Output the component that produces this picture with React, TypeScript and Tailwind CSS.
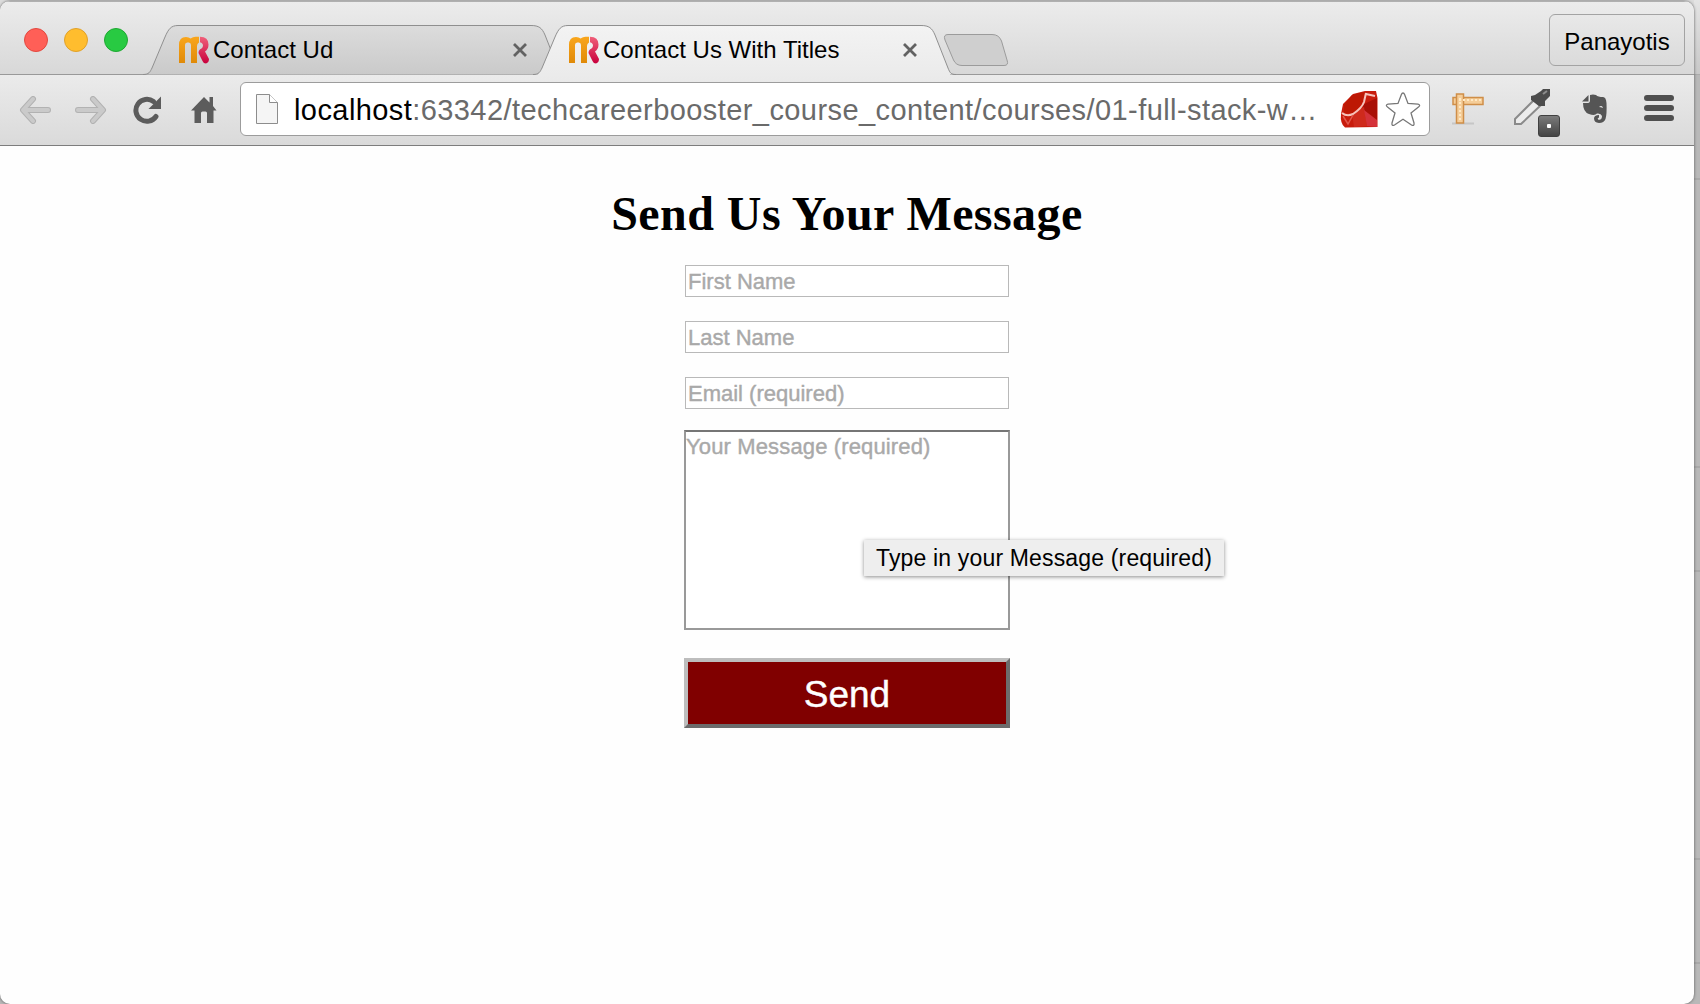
import React from "react";

function Favicon({ id }: { id: string }) {
  return (
    <svg width="32" height="28" viewBox="0 0 32 28" className="shrink-0">
      <defs>
        <linearGradient id={id + "o"} x1="0" y1="0" x2="0" y2="1">
          <stop offset="0" stopColor="#f9a61c" />
          <stop offset="1" stopColor="#e08a08" />
        </linearGradient>
        <linearGradient id={id + "r"} x1="0" y1="0" x2="0" y2="1">
          <stop offset="0" stopColor="#f0607a" />
          <stop offset="1" stopColor="#c8003c" />
        </linearGradient>
      </defs>
      <path d="M1 27V9Q1 1 8 1Q11 1 12.500 2.500Q15 .8 17.500 .8H21V6.500Q19 7.500 19 10V27H13V9Q13 6.500 10.800 6.500H9.200Q7 6.500 7 9V27Z" fill={"url(#" + id + "o)"} />
      <path d="M22 .8Q30.500 1 30.500 8.500Q30.500 13 27 15.500L31 23Q31 26.500 28 27.500Q25.500 27.500 24.500 25L20.500 17Q20.500 13.500 23.500 12.500Q25 11.500 25 9.500Q25 7 22 6.200Z" fill={"url(#" + id + "r)"} />
    </svg>
  );
}

function CloseMark() {
  return (
    <svg width="16" height="16" viewBox="0 0 16 16" className="shrink-0">
      <path d="M2 2L14 14M14 2L2 14" stroke="#626262" strokeWidth="2.800" />
    </svg>
  );
}

function Tab({ title, active }: { title: string; active?: boolean }) {
  return (
    <div className={"relative h-[50px] w-[390px] shrink-0 " + (active ? "z-10" : "")}>
      <svg width="424" height="52" viewBox="0 0 424 52" className="absolute left-0 top-0">
        <defs>
          <linearGradient id={active ? "ga" : "gi"} x1="0" y1="0" x2="0" y2="1">
            <stop offset="0" stopColor={active ? "#f3f3f3" : "#dcdcdc"} />
            <stop offset="1" stopColor={active ? "#ebebeb" : "#cacaca"} />
          </linearGradient>
        </defs>
        <path
          d="M0 49.500C6 49.500 7 47 9 43L22 12C25.500 4 28 .5 35 .5H388C396 .5 399 3 402 10L415 43C417 48 418 49.500 423 49.500"
          fill={active ? "url(#ga)" : "url(#gi)"}
          stroke="#8f8f8f"
        />
        {active && <path d="M5 49.800H417" stroke="#ebebeb" strokeWidth="1.600" />}
      </svg>
      <div className="relative flex h-full items-center pl-[35px]">
        <Favicon id={active ? "fa" : "fb"} />
        <span className="ml-[3px] w-[299px] whitespace-nowrap text-[24px] leading-[28px] tracking-[0.02px]">{title}</span>
        <CloseMark />
      </div>
    </div>
  );
}

function NavIcons() {
  return (
    <div className="flex items-center">
      <svg width="32" height="28" viewBox="0 0 32 28" className="ml-[19px]">
        <path d="M14 3L4 14L14 25M5 14H29" fill="none" stroke="#b2b2b2" strokeWidth="6" strokeLinecap="round" strokeLinejoin="round" />
        <path d="M14 3L4 14L14 25M5 14H29" fill="none" stroke="#cacaca" strokeWidth="4" strokeLinecap="round" strokeLinejoin="round" />
      </svg>
      <svg width="32" height="28" viewBox="0 0 32 28" className="ml-[24px]">
        <path d="M18 3L28 14L18 25M27 14H3" fill="none" stroke="#b2b2b2" strokeWidth="6" strokeLinecap="round" strokeLinejoin="round" />
        <path d="M18 3L28 14L18 25M27 14H3" fill="none" stroke="#cacaca" strokeWidth="4" strokeLinecap="round" strokeLinejoin="round" />
      </svg>
      <svg width="30" height="28" viewBox="0 0 30 28" className="ml-[26px]">
        <path d="M23 20.500A11 11 0 1 1 20.500 5.500" fill="none" stroke="#5c5c5c" strokeWidth="5" strokeLinecap="round" />
        <path d="M28 .5V13H15.500Z" fill="#5c5c5c" />
      </svg>
      <svg width="26" height="28" viewBox="0 0 26 28" className="ml-[28px]">
        <path d="M13 1L18.500 6.500V1H22V10L25.500 14.500H22.500V27H16V17Q16 15.500 14.500 15.500H11.500Q10 15.500 10 17V27H3.500V14.500H0Z" fill="#5c5c5c" />
      </svg>
    </div>
  );
}

function Ruby() {
  return (
    <svg width="38" height="38" viewBox="0 0 38 38" className="shrink-0">
      <path d="M1 24L3 14L13 4L25 1L36 1L37.500 8V37L5 37.500Q0 34 1 24Z" fill="#c81c0c" />
      <path d="M4 15L12 5L25 2L22 14L13 23L4 23Z" fill="#bd1804" />
      <path d="M22 15L37 8V36L25 22Z" fill="#a90f06" />
      <path d="M12 24L24 17L27 36L14 37Z" fill="#cf2a1c" />
      <path d="M27 36L24 20L37 30V37Z" fill="#d4323a" />
      <path d="M2 23Q7 27 13 24Q22 18 24 12L26 3M26 4L35 6" fill="none" stroke="#f6c2ba" strokeWidth="2" />
      <path d="M3 26L8 34L13 25" fill="none" stroke="#e2574c" strokeWidth="1.500" />
    </svg>
  );
}

function Extensions() {
  return (
    <div className="flex items-start">
      <svg width="34" height="34" viewBox="0 0 34 34" className="ml-[21px] mt-[10px]">
        <path d="M1 31.500H23" stroke="#c6c6c6" strokeWidth="2" />
        <g fill="#f5cd98" stroke="#cf8e48" strokeWidth="1.500">
          <path d="M2 5.500H32V12.500H2Z" />
          <path d="M5.500 2H12.500V31H5.500Z" />
        </g>
        <path d="M8 8H31M9 6V29" stroke="#ffe9c4" strokeWidth="2" strokeDasharray="2 2" />
      </svg>
      <div className="relative ml-[28px] h-[56px] w-[47px]">
        <svg width="47" height="56" viewBox="0 0 47 56">
          <path d="M2 42V37L21 18L27 24L8 42Z" fill="#ececec" stroke="#8a8a8a" strokeWidth="2" />
          <path d="M18 14L22 13L28 9L30 7H37V14L32 19V24H26L18 18Z" fill="#4c4c4c" />
          <path d="M30 12L34 9" stroke="#8c8c8c" strokeWidth="2" />
        </svg>
        <div className="absolute left-[25px] top-[33px] flex h-[22px] w-[22px] items-center justify-center rounded-[3px] border border-[#404040] bg-linear-to-b from-[#7b7b7b] to-[#454545]">
          <span className="h-[4px] w-[4px] rounded-[1px] bg-white" />
        </div>
      </div>
      <svg width="26" height="30" viewBox="0 0 26 30" className="ml-[22px] mt-[12px]">
        <path d="M8 1Q11 0 14 1Q16 3 21 3Q24 3 24.500 9Q25 20 23.500 25Q22 29 17 29Q12 28.500 12 24.500Q12 21 17 21V23.500Q15 24 16 25.500Q20 26.500 20 22Q19 19 15 19.500Q13 22 7 20Q1 18 1 9H6Q8 9 8 6Z" fill="#555" />
        <path d="M6.500 1V7.500H0Z" fill="#555" />
        <path d="M17 13Q20 10.500 21 14Q19 13 17 13Z" fill="#eee" />
      </svg>
      <svg width="30" height="28" viewBox="0 0 30 28" className="ml-[36px] mt-[12px]">
        <path d="M3 4H27M3 14H27M3 24H27" stroke="#4f4f4f" strokeWidth="6" strokeLinecap="round" />
      </svg>
    </div>
  );
}

const fields = ["First Name", "Last Name", "Email (required)"];

export default function App() {
  return (
    <div className="relative flex h-[1004px] w-[1700px] overflow-hidden bg-[#b8b8b8] pt-px font-['Liberation_Sans',Arial,sans-serif] text-black">
      <div className="absolute left-0 top-0 h-[10px] w-full bg-[#dcdcdc]" />
      <div className="absolute right-0 top-0 flex h-full w-[6px] flex-col">
        <div className="h-[75px] shrink-0 border-b border-[#aaa] bg-linear-to-b from-[#e4e4e4] to-[#c8c8c8]" />
        <div className="h-[105px] shrink-0 border-b-2 border-[#a8a8a8]" />
        <div className="h-[288px] shrink-0 border-b-2 border-[#a8a8a8]" />
        <div className="h-[104px] shrink-0 border-b-2 border-[#a8a8a8]" />
        <div className="h-[288px] shrink-0 border-b-2 border-[#a8a8a8]" />
        <div className="h-[104px] shrink-0 border-b-2 border-[#a8a8a8]" />
      </div>
      <div className="relative flex h-[1003px] w-[1694px] flex-col overflow-hidden rounded-[10px] bg-[#fefefe] shadow-[0_0_3px_#555]">
        <header className="flex h-[74px] shrink-0 border-b border-[#999] border-t border-t-[#b0b0b0] bg-linear-to-b from-[#ececec] to-[#d8d8d8]">
          <div className="flex w-[143px] gap-4 pl-6 pt-[26px]">
            <span className="h-6 w-6 rounded-full border border-[#e2483f] bg-[#ff5f57]" />
            <span className="h-6 w-6 rounded-full border border-[#e0a12a] bg-[#ffbd2e]" />
            <span className="h-6 w-6 rounded-full border border-[#1ea832] bg-[#28ca42]" />
          </div>
          <div className="flex pt-[23px]">
            <Tab title="Contact Ud" />
            <Tab title="Contact Us With Titles" active />
          </div>
          <svg width="66" height="34" viewBox="0 0 66 34" className="ml-[20px] mt-[32px]">
            <path d="M5 .5H49Q56 .5 58.500 7L64 26Q66 31.500 61 31.500H19Q13 31.500 10.500 26L2 6Q0 .5 5 .5Z" fill="#cfcfcf" stroke="#9b9b9b" />
          </svg>
          <div className="ml-auto mr-[9px] mt-[12px] flex h-[52px] w-[136px] items-center justify-center rounded-[6px] border border-[#a3a3a3] pt-[3px] text-[24px]">
            Panayotis
          </div>
        </header>
        <div className="flex h-[71px] shrink-0 border-b border-[#7d7d7d] bg-linear-to-b from-[#ebebeb] to-[#dadada]">
          <div className="flex h-[70px] w-[240px] items-center">
            <NavIcons />
          </div>
          <div className="mt-[7px] flex h-[54px] w-[1190px] items-center rounded-[6px] border border-[#9c9c9c] bg-white">
            <svg width="24" height="32" viewBox="0 0 24 32" className="ml-[14px] shrink-0">
              <path d="M1.500 1.500H14.500L22.500 9.500V30.500H1.500Z" fill="#f5f5f5" stroke="#8d8d8d" />
              <path d="M14.500 1.500V9.500H22.500" fill="#fff" stroke="#8d8d8d" />
            </svg>
            <div className="ml-[15px] w-[1046px] whitespace-nowrap pt-[2px] text-[29px] leading-[34px] tracking-[0.42px] text-[#6a6a6a]">
              <span className="text-black">localhost</span>:63342/techcareerbooster_course_content/courses/01-full-stack-w…
            </div>
            <Ruby />
            <svg width="36" height="36" viewBox="0 0 36 36" className="ml-[7px] shrink-0">
              <path d="M18 2Q19 2 19.600 3.500L23 12.500L33 13.200Q36 14 33.500 16L26 22L29 32Q29.500 35.500 26.500 34L18 28.300L9.500 34Q6.500 35.500 7 32L10 22L2.500 16Q0 14 3 13.200L13 12.500L16.400 3.500Q17 2 18 2Z" fill="#fff" stroke="#777" strokeWidth="1.300" />
            </svg>
          </div>
          <div className="mt-[7px]">
            <Extensions />
          </div>
        </div>
        <main className="flex flex-col items-center">
          <h1 className="mt-[41px] font-['Liberation_Serif','Times_New_Roman',serif] text-[48px] font-bold leading-[54px] tracking-[0.44px]">Send Us Your Message</h1>
          <div className="mt-[24px] flex flex-col gap-6">
            {fields.map((f) => (
              <input
                key={f}
                placeholder={f}
                className="h-8 w-[324px] border border-[#b9b9b9] bg-white px-[2px] pt-[2px] text-[22px] leading-[28px] [-webkit-text-stroke:0.4px_#a9a9a9] placeholder:text-[#a9a9a9] placeholder:opacity-100"
              />
            ))}
          </div>
          <div className="relative mt-[21px] h-[200px] w-[326px]">
            <textarea
              placeholder="Your Message (required)"
              className="block h-[200px] w-[326px] resize-none border-2 border-[#999] border-t-[#767676] bg-white pt-px text-[22px] leading-[28px] tracking-[0.14px] [-webkit-text-stroke:0.4px_#a9a9a9] placeholder:text-[#a9a9a9]"
            />
            <div className="absolute left-[180px] top-[110px] flex h-[36px] w-[360px] items-center whitespace-nowrap bg-[#eee] pl-[12px] text-[23px] tracking-[0.16px] shadow-[0_1px_4px_rgba(0,0,0,0.45)]">
              Type in your Message (required)
            </div>
          </div>
          <button className="mt-[28px] h-[70px] w-[326px] border-4 border-b-[#6c6c6c] border-l-[#bdbdbd] border-r-[#6c6c6c] border-t-[#bdbdbd] bg-[#800000] pt-[2px] text-[37px] leading-none text-white [-webkit-text-stroke:0.4px_white]">
            Send
          </button>
        </main>
      </div>
    </div>
  );
}
